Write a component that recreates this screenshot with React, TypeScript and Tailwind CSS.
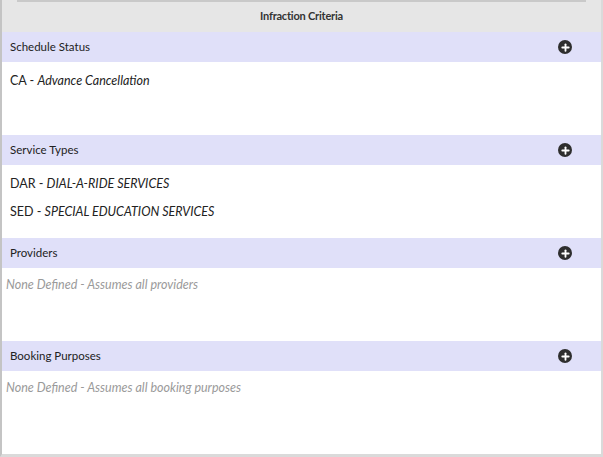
import { Plus } from "lucide-react";

type Section = {
  title: string;
  items: { code: string; desc: string }[];
  empty?: string;
};

const sections: Section[] = [
  { title: "Schedule Status", items: [{ code: "CA", desc: "Advance Cancellation" }] },
  {
    title: "Service Types",
    items: [
      { code: "DAR", desc: "DIAL-A-RIDE SERVICES" },
      { code: "SED", desc: "SPECIAL EDUCATION SERVICES" },
    ],
  },
  { title: "Providers", items: [], empty: "None Defined - Assumes all providers" },
  { title: "Booking Purposes", items: [], empty: "None Defined - Assumes all booking purposes" },
];

function AddButton() {
  return (
    <button
      type="button"
      className="flex h-[14px] w-[14px] items-center justify-center rounded-full bg-[#2e2e2e] text-white"
    >
      <Plus className="h-[11px] w-[11px]" strokeWidth={4} />
    </button>
  );
}

export default function App() {
  return (
    <div
      className="flex h-[457px] w-[603px] flex-col border-b-[3px] border-l-2 border-r-2 border-[#dadada] border-l-[#c4c4c4] bg-white text-[#222]"
      style={{ fontFamily: "Lato, 'Open Sans', sans-serif" }}
    >
      {/* Header */}
      <div className="flex h-[32px] shrink-0 flex-col bg-[#e6e6e6]">
        <div className="mx-[15px] h-[2px] bg-[#c9c9c9]" />
        <div className="flex flex-1 items-center justify-center pb-[1px] text-[11px] font-bold tracking-[-0.2px] text-[#333]">
          Infraction Criteria
        </div>
      </div>

      {sections.map((s, i) => {
        const last = i === sections.length - 1;
        return (
          <div key={s.title} className={last ? "flex flex-1 flex-col" : "flex shrink-0 flex-col"}>
            <div className="flex h-[30px] shrink-0 items-center justify-between bg-[#e0e0f9] pl-[8px] pr-[29px] text-[11.5px] text-[#222]">
              <span>{s.title}</span>
              <AddButton />
            </div>
            <div className={last ? "flex-1 pt-[5px]" : "h-[73px] pt-[5px]"}>
              {s.items.map((it) => (
                <div key={it.code} className="flex h-[28px] items-center pl-[8px] text-[12.5px] text-[#222]">
                  {it.code} -&nbsp;<span className="italic">{it.desc}</span>
                </div>
              ))}
              {s.empty && (
                <div className="flex h-[24px] items-center pl-[4px] text-[12.5px] italic text-[#9a9a9a]">
                  {s.empty}
                </div>
              )}
            </div>
          </div>
        );
      })}
    </div>
  );
}
